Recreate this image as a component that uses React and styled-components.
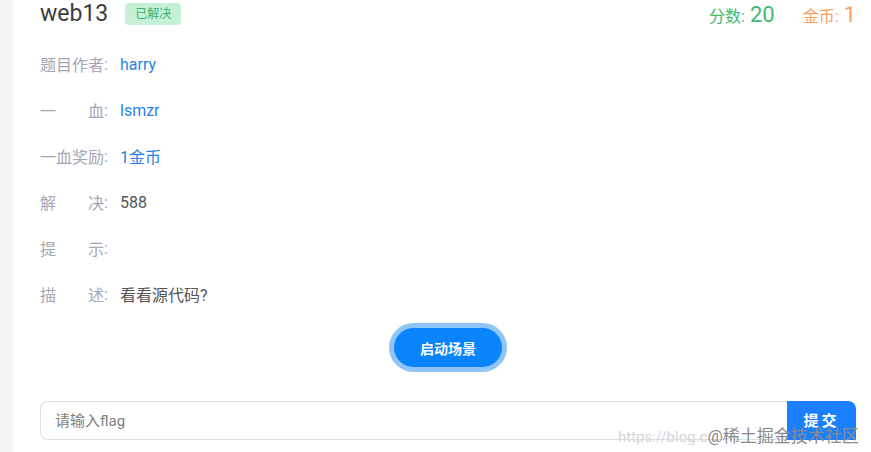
import styled, { createGlobalStyle } from "styled-components";

const Global = createGlobalStyle`
  html, body {
    margin: 0;
    padding: 0;
    background: #f4f5f7;
    font-family: Roboto, "Noto Sans CJK SC", sans-serif;
  }
`

const Page = styled.div`
  position: relative;
  width: 871px;
  height: 452px;
  padding-left: 13px;
  box-sizing: border-box;
  overflow: hidden;
`

const Card = styled.div`
  background: #fff;
  height: 100%;
  padding: 0 15px 0 27px;
  box-sizing: border-box;
`

const Header = styled.div`
  display: flex;
  align-items: center;
  height: 28px;
  margin-bottom: 13px;
`

const Title = styled.span`
  font-size: 23px;
  color: #3c3c3c;
  line-height: 26px;
`

const Badge = styled.span`
  margin-left: 17px;
  background: #c5f0d6;
  color: #3bb36c;
  font-size: 12px;
  line-height: 22px;
  height: 22px;
  padding: 0 10px;
  border-radius: 4px;
`

const Stats = styled.div`
  margin-left: auto;
  display: flex;
  align-items: baseline;
  gap: 28px;
`

const Stat = styled.span`
  color: ${p => p.color};
  font-size: 16px;

  b {
    font-weight: 400;
    font-size: 22px;
    margin-left: 5px;
  }
`

const Row = styled.div`
  display: flex;
  align-items: center;
  height: 46px;
  font-size: 16px;
`

const Label = styled.span`
  display: inline-block;
  width: 64px;
  color: #a2a7b6;
  text-align: justify;
  text-align-last: justify;
`

const Colon = styled.span`
  color: #a2a7b6;
  width: 16px;
`

const Value = styled.span`
  color: ${p => (p.link ? "#2a82e4" : "#555")};
`

const Center = styled.div`
  display: flex;
  justify-content: center;
  margin-top: 11px;
`

const StartButton = styled.button`
  width: 108px;
  height: 39px;
  border: none;
  border-radius: 20px;
  background: #0a84fc;
  color: #fff;
  font-family: inherit;
  font-size: 14px;
  font-weight: 700;
  box-shadow: 0 0 0 5px #8fc6f7;
`

const FlagRow = styled.div`
  display: flex;
  margin-top: 34px;
  height: 39px;
`

const Input = styled.input`
  flex: 1;
  border: 1px solid #dcdfe6;
  border-right: none;
  border-radius: 8px 0 0 8px;
  padding: 0 14px;
  font-family: inherit;
  font-size: 15px;
  color: #555;
  outline: none;

  &::placeholder {
    color: #808080;
  }
`

const SubmitButton = styled.button`
  width: 69px;
  border: none;
  border-radius: 0 8px 0 0;
  background: #1a80fb;
  color: #fff;
  font-family: inherit;
  font-size: 15px;
  font-weight: 700;
  letter-spacing: 3px;
  padding-bottom: 4px;
`

const Watermark = styled.div`
  position: absolute;
  left: 618px;
  top: 422px;
  white-space: nowrap;
  font-size: 15px;
  color: #d4d6da;

  span {
    color: #8a8a8a;
    font-size: 17px;
  }
`

const rows = [
  { label: "题目作者", value: "harry", link: true },
  { label: "一血", value: "lsmzr", link: true },
  { label: "一血奖励", value: "1金币", link: true },
  { label: "解决", value: "588" },
  { label: "提示", value: "" },
  { label: "描述", value: "看看源代码?" },
]

function App() {
  return (
    <Page>
      <Global />
      <Card>
        <Header>
          <Title>web13</Title>
          <Badge>已解决</Badge>
          <Stats>
            <Stat color="#3dba6f">分数:<b>20</b></Stat>
            <Stat color="#f2a062">金币:<b>1</b></Stat>
          </Stats>
        </Header>

        {rows.map(r => (
          <Row key={r.label}>
            <Label>{r.label}</Label>
            <Colon>:</Colon>
            <Value link={r.link}>{r.value}</Value>
          </Row>
        ))}

        <Center>
          <StartButton>启动场景</StartButton>
        </Center>

        <FlagRow>
          <Input placeholder="请输入flag" />
          <SubmitButton>提交</SubmitButton>
        </FlagRow>
      </Card>
      <Watermark>https://blog.c<span>@稀土掘金技术社区</span></Watermark>
    </Page>
  )
}

export default App
